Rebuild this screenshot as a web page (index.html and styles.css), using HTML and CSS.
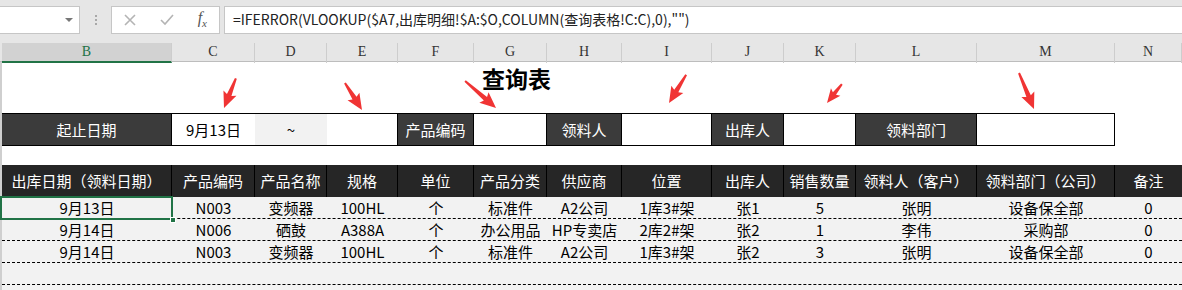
FILE: index.html
```html
<!DOCTYPE html>
<html lang="zh-CN">
<head>
  <meta charset="UTF-8">
  <title>查询表</title>
  <link rel="stylesheet" href="styles.css">
</head>
<body>

<div class="toolbar">
  <div class="namebox"><span class="caret"></span></div>
  <div class="grip"><i></i><i></i><i></i></div>
  <div class="fxbox">
    <svg class="ico" width="12" height="12" viewBox="0 0 12 12"><path d="M1 1 L11 11 M11 1 L1 11" /></svg>
    <svg class="ico" width="14" height="12" viewBox="0 0 14 12"><path d="M1 6 L5 10 L13 1" /></svg>
    <span class="fx">f<sub>x</sub></span>
  </div>
  <div class="formula">=IFERROR(VLOOKUP($A7,出库明细!$A:$O,COLUMN(查询表格!C:C),0),"")</div>
</div>

<div class="colhead">
  <div class="sel">B</div><div>C</div><div>D</div><div>E</div><div>F</div><div>G</div><div>H</div>
  <div>I</div><div>J</div><div>K</div><div>L</div><div>M</div><div>N</div>
</div>

<div class="sheet">
  <div class="title-row">
    <h1 class="title">查询表</h1>
  </div>

  <div class="filter">
    <div class="lab first">起止日期</div>
    <div class="val open">9月13日</div>
    <div class="tilde open">~</div>
    <div class="val"></div>
    <div class="lab">产品编码</div>
    <div class="val"></div>
    <div class="lab">领料人</div>
    <div class="val"></div>
    <div class="lab">出库人</div>
    <div class="val"></div>
    <div class="lab">领料部门</div>
    <div class="val"></div>
  </div>

  <div class="thead">
    <div>出库日期（领料日期）</div><div>产品编码</div><div>产品名称</div><div>规格</div>
    <div>单位</div><div>产品分类</div><div>供应商</div><div>位置</div><div>出库人</div>
    <div>销售数量</div><div>领料人（客户）</div><div>领料部门（公司）</div><div>备注</div>
  </div>

  <div class="drow">
    <div class="active">9月13日<span class="handle"></span></div><div>N003</div><div>变频器</div><div>100HL</div>
    <div>个</div><div>标准件</div><div>A2公司</div><div>1库3#架</div><div>张1</div>
    <div>5</div><div>张明</div><div>设备保全部</div><div>0</div>
  </div>
  <div class="drow">
    <div>9月14日</div><div>N006</div><div>硒鼓</div><div>A388A</div>
    <div>个</div><div>办公用品</div><div>HP专卖店</div><div>2库2#架</div><div>张2</div>
    <div>1</div><div>李伟</div><div>采购部</div><div>0</div>
  </div>
  <div class="drow">
    <div>9月14日</div><div>N003</div><div>变频器</div><div>100HL</div>
    <div>个</div><div>标准件</div><div>A2公司</div><div>1库3#架</div><div>张2</div>
    <div>3</div><div>张明</div><div>设备保全部</div><div>0</div>
  </div>
  <div class="drow"></div>
  <div class="drow tail"></div>
</div>

<!-- red annotation arrows drawn over the sheet -->
<svg class="arrows" width="1182" height="290" viewBox="0 0 1182 290">
  <polygon transform="translate(224,108) rotate(111.8)" points="-32,-1 -14,-2.4 -16,-7 0,0 -16,7 -14,2.4 -32,1" />
  <polygon transform="translate(362,110) rotate(57.8)" points="-32,-1 -14,-2.4 -16,-7 0,0 -16,7 -14,2.4 -32,1" />
  <polygon transform="translate(496,108) rotate(41.1)" points="-41,-1 -14,-2.4 -16,-7 0,0 -16,7 -14,2.4 -41,1" />
  <polygon transform="translate(669,103) rotate(121.3)" points="-33,-1 -14,-2.4 -16,-7 0,0 -16,7 -14,2.4 -33,1" />
  <polygon transform="translate(827,103) rotate(128.3)" points="-24,-1 -12,-2 -14,-6 0,0 -14,6 -12,2 -24,1" />
  <polygon transform="translate(1034,109) rotate(67.4)" points="-39,-1 -14,-2.4 -16,-7 0,0 -16,7 -14,2.4 -39,1" />
</svg>

</body>
</html>
```

FILE: styles.css
```css
:root {
  --cols: 170px 83px 72px 71px 76px 73px 75px 90px 72px 72px 121px 138px 67px;
  --chrome: #e6e6e6;
  --edge: #c6c6c6;
  --dark-head: #262626;
  --dark-label: #3b3b3b;
  --row-bg: #f2f2f2;
  --excel-green: #217346;
  --arrow: #f03434;
}

* {
  box-sizing: border-box;
}

body {
  margin: 0;
  width: 1182px;
  height: 290px;
  overflow: hidden;
  position: relative;
  background: #fff;
  font-family: "Noto Sans CJK SC", "Noto Sans", sans-serif;
  font-size: 15px;
  color: #000;
}

/* formula bar */
.toolbar {
  height: 43px;
  background: var(--chrome);
  display: flex;
  align-items: flex-start;
  padding-top: 6px;
}

.namebox {
  width: 80px;
  height: 28px;
  background: #fff;
  border: 1px solid var(--edge);
  border-left: none;
  position: relative;
}

.caret {
  position: absolute;
  right: 6px;
  top: 11px;
  border-left: 4px solid transparent;
  border-right: 4px solid transparent;
  border-top: 4px solid #777;
}

.grip {
  width: 31px;
  height: 28px;
  display: flex;
  flex-direction: column;
  align-items: center;
  justify-content: center;
  gap: 2px;
}

.grip i {
  width: 2px;
  height: 2px;
  background: #a8a8a8;
}

.fxbox {
  width: 109px;
  height: 28px;
  background: #fff;
  border: 1px solid var(--edge);
  display: flex;
  align-items: center;
  justify-content: space-between;
  padding: 0 12px 0 12px;
}

.ico path {
  fill: none;
  stroke: #b4b4b4;
  stroke-width: 1.6;
}

.fx {
  font-family: "Liberation Serif", serif;
  font-style: italic;
  font-size: 16px;
  color: #555;
  line-height: 1;
}

.fx sub {
  font-size: 11px;
}

.formula {
  flex: 1;
  margin-left: 4px;
  height: 28px;
  background: #fff;
  border: 1px solid var(--edge);
  border-right: none;
  padding-left: 8px;
  font-size: 14px;
  line-height: 25px;
  color: #222;
  white-space: nowrap;
}

/* column letters */
.colhead {
  display: grid;
  grid-template-columns: var(--cols);
  height: 19px;
  background: var(--chrome);
  border-bottom: 1px solid #bdbdbd;
  padding-left: 2px;
  font-family: "Liberation Serif", serif;
  font-size: 14px;
  color: #333;
}

.colhead div {
  border-right: 1px solid #cdcdcd;
  text-align: center;
  line-height: 18px;
}

.colhead .sel {
  background: #d2d2d2;
  border-bottom: 2px solid var(--excel-green);
  color: var(--excel-green);
}

/* sheet */
.sheet {
  border-left: 2px solid #cfcfcf;
}

.title-row {
  height: 32px;
  margin-bottom: 19px;
  display: grid;
  grid-template-columns: var(--cols);
}

.title {
  grid-column: 4 / 9;
  margin: 0;
  padding-right: 6px;
  text-align: center;
  font-size: 23px;
  font-weight: bold;
  line-height: 32px;
}

.filter {
  display: grid;
  grid-template-columns: var(--cols);
  height: 33px;
  margin-bottom: 19px;
}

.filter div {
  border-top: 1px solid #000;
  border-bottom: 1px solid #000;
  border-right: 1px solid #000;
  text-align: center;
  line-height: 31px;
}

.filter .lab {
  background: var(--dark-label);
  color: #fff;
}

.filter .val {
  background: #fff;
}

.filter .open {
  border-right: none;
}

.filter .tilde {
  background: var(--row-bg);
}

.thead {
  display: grid;
  grid-template-columns: var(--cols);
  height: 32px;
  background: var(--dark-head);
  color: #fff;
}

.thead div {
  border-right: 1px solid #000;
  text-align: center;
  line-height: 32px;
  white-space: nowrap;
}

.thead div:last-child {
  border-right: none;
}

.drow {
  display: grid;
  grid-template-columns: var(--cols);
  height: 22px;
  background: var(--row-bg);
  border-bottom: 1px dashed #000;
}

.drow.tail {
  height: 5px;
  border-bottom: none;
}

.drow div {
  text-align: center;
  line-height: 21px;
  white-space: nowrap;
}

.drow .active {
  position: relative;
}

.drow .active::after {
  content: "";
  position: absolute;
  left: -2px;
  top: -1px;
  right: -1px;
  bottom: -2px;
  border: 2px solid var(--excel-green);
}

.handle {
  position: absolute;
  right: -4px;
  bottom: -5px;
  width: 6px;
  height: 6px;
  background: var(--excel-green);
  border: 1px solid #fff;
  z-index: 1;
}

.arrows {
  position: absolute;
  left: 0;
  top: 0;
  pointer-events: none;
}

.arrows polygon {
  fill: var(--arrow);
}
```
